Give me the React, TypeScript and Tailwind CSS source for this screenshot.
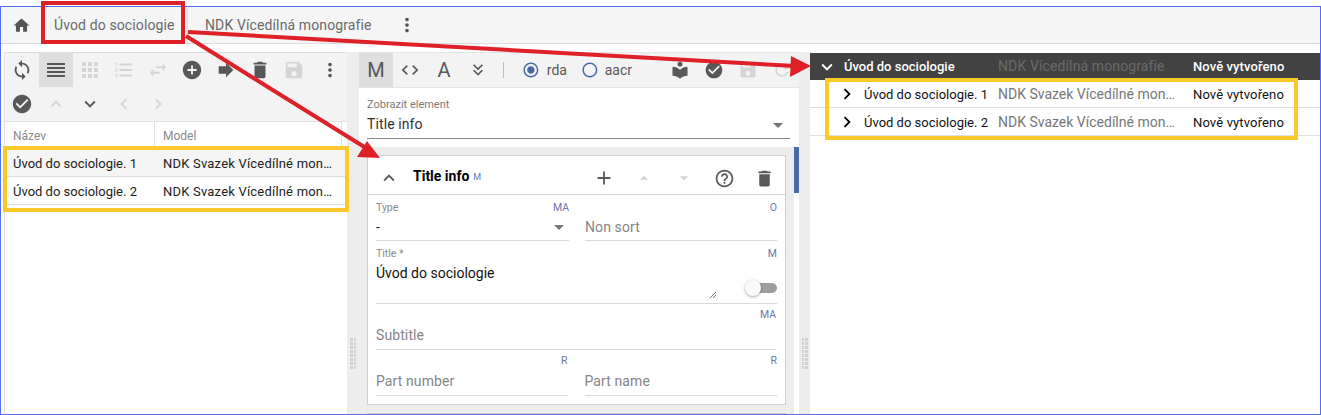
import type { ReactNode } from "react";
import {
  MdAdd,
  MdAddCircle,
  MdApps,
  MdArrowDropDown,
  MdArrowDropUp,
  MdCheckCircle,
  MdChevronLeft,
  MdChevronRight,
  MdCode,
  MdDelete,
  MdExpandLess,
  MdExpandMore,
  MdForward,
  MdFormatListNumbered,
  MdHelpOutline,
  MdHome,
  MdKeyboardDoubleArrowDown,
  MdLocalLibrary,
  MdMoreVert,
  MdRadioButtonChecked,
  MdRadioButtonUnchecked,
  MdRefresh,
  MdReorder,
  MdSave,
  MdSwapHoriz,
  MdSync,
} from "react-icons/md";

// ─── Toolbar button ───────────────────────────────────────────────────────────

function Tool({ children, active, off }: { children: ReactNode; active?: boolean; off?: boolean }) {
  return (
    <span
      className={
        "flex h-[34px] w-[34px] shrink-0 items-center justify-center " +
        (active ? "bg-[#dedede] " : "") +
        (off ? "text-[#d5d5d5]" : "text-[#585858]")
      }
    >
      {children}
    </span>
  );
}

// ─── Form field ───────────────────────────────────────────────────────────────

function Field({
  label,
  usage,
  placeholder,
  value,
  select,
  className,
}: {
  label?: string;
  usage: string;
  placeholder?: string;
  value?: string;
  select?: boolean;
  className: string;
}) {
  return (
    <div className={"flex flex-col border-b border-[#d9d9d9] " + className}>
      <div className="flex h-[12px] shrink-0 items-center justify-between text-[10.5px] leading-none">
        <span className="text-[#8a8a8a]">{label}</span>
        <span className="text-[#6a76ab]">{usage}</span>
      </div>
      <div className="flex flex-1 items-center justify-between text-[14px] tracking-[0.1px]">
        <span className={placeholder ? "text-[#858585]" : "text-[#222222]"}>{placeholder ?? value}</span>
        {select && <MdArrowDropDown size={24} className="-mr-[2px] text-[#757575]" />}
      </div>
    </div>
  );
}

// ─── Gutter grip ──────────────────────────────────────────────────────────────

function Gutter({ className }: { className: string }) {
  return (
    <div className={"flex shrink-0 justify-center bg-[#ededed] pt-[286px] " + className}>
      <div className="grid h-[31px] w-[6px] grid-cols-2 gap-x-[1px] gap-y-[1px]">
        {Array.from({ length: 16 }).map((_, i) => (
          <span key={i} className="h-[3px] w-[2.5px] bg-[#d2d2d2]" />
        ))}
      </div>
    </div>
  );
}

const LEFT_ROWS = ["Úvod do sociologie. 1", "Úvod do sociologie. 2"];

export default function App() {
  return (
    <div className="relative h-[415px] w-[1321px] overflow-hidden bg-white pt-[6px] text-[13px] [font-family:Roboto,sans-serif]">
      <div className="flex h-[409px] flex-col border border-[#4f6ff0]">
        {/* ── Top bar ─────────────────────────────────────────────────────── */}
        <div className="flex h-[37px] shrink-0 items-center border-b border-[#dddddd] bg-[#f5f5f5] text-[14px] tracking-[0.12px] text-[#6a6a6a]">
          <MdHome size={19} className="ml-[11px] text-[#555555]" />
          <span className="ml-[23px] flex h-full w-[134px] items-center border-r border-[#dddddd]">Úvod do sociologie</span>
          <span className="ml-[17px] w-[191px]">NDK Vícedílná monografie</span>
          <MdMoreVert size={22} className="text-[#555555]" />
        </div>

        <div className="flex min-h-0 flex-1 pt-[8px]">
          {/* ── Left panel ────────────────────────────────────────────────── */}
          <div className="ml-[3px] w-[343px] shrink-0 border-l border-t border-[#e0e0e0]">
            <div className="border-b border-[#e0e0e0] bg-[#f3f3f3]">
              <div className="flex">
                <Tool><MdSync size={22} /></Tool>
                <Tool active><MdReorder size={24} /></Tool>
                <Tool off><MdApps size={24} /></Tool>
                <Tool off><MdFormatListNumbered size={22} /></Tool>
                <Tool off><MdSwapHoriz size={22} /></Tool>
                <Tool><MdAddCircle size={22} /></Tool>
                <Tool><MdForward size={22} /></Tool>
                <Tool><MdDelete size={22} /></Tool>
                <Tool off><MdSave size={22} /></Tool>
                <span className="w-[4px]" />
                <Tool><MdMoreVert size={22} /></Tool>
              </div>
              <div className="flex">
                <Tool><MdCheckCircle size={22} /></Tool>
                <Tool off><MdExpandLess size={22} /></Tool>
                <Tool><MdExpandMore size={22} /></Tool>
                <Tool off><MdChevronLeft size={22} /></Tool>
                <Tool off><MdChevronRight size={22} /></Tool>
              </div>
            </div>
            <div className="flex h-[27px] border-b border-[#e0e0e0] text-[12px] text-[#8a8a8a]">
              <div className="flex w-[150px] items-center border-r border-[#e0e0e0] pl-[8px] pt-[2px]">Název</div>
              <div className="flex w-[187px] items-center border-r border-[#e0e0e0] pl-[8px] pt-[2px]">Model</div>
            </div>
            {LEFT_ROWS.map((name, idx) => (
              <div
                key={name}
                className={"flex h-[28px] items-center border-b border-[#dddddd] pt-[2px] " + (idx === 0 ? "bg-[#f5f5f5]" : "")}
              >
                <div className="w-[150px] pl-[8px] text-[#222222]">{name}</div>
                <div className="w-[178px] truncate pl-[8px] tracking-[0.2px] text-[#222222]">NDK Svazek Vícedílné monografie</div>
              </div>
            ))}
          </div>

          <Gutter className="w-[12px]" />

          {/* ── Middle panel ──────────────────────────────────────────────── */}
          <div className="flex w-[440px] shrink-0 flex-col">
            <div className="flex h-[36px] shrink-0 items-center border-b border-t border-[#e4e4e4] bg-[#f3f3f3] text-[#585858]">
              <Tool active><span className="text-[20px]">M</span></Tool>
              <Tool><MdCode size={20} /></Tool>
              <Tool><span className="text-[20px]">A</span></Tool>
              <Tool><MdKeyboardDoubleArrowDown size={20} /></Tool>
              <span className="ml-[8px] h-[16px] w-px bg-[#bdbdbd]" />
              <MdRadioButtonChecked size={18} className="ml-[18px] text-[#4a6aa5]" />
              <span className="ml-[7px] text-[14px]">rda</span>
              <MdRadioButtonUnchecked size={18} className="ml-[14px] text-[#4a6aa5]" />
              <span className="ml-[6px] text-[14px]">aacr</span>
              <span className="ml-[31px] flex">
                <Tool><MdLocalLibrary size={20} /></Tool>
                <Tool><MdCheckCircle size={20} /></Tool>
                <Tool off><MdSave size={20} /></Tool>
                <Tool off><MdRefresh size={20} /></Tool>
              </span>
            </div>
            <div className="h-[59px] shrink-0 px-[8px] pt-[10px]">
              <div className="text-[11px] leading-[13px] text-[#7a7a7a]">Zobrazit element</div>
              <div className="flex h-[28px] w-[423px] items-center justify-between border-b border-[#8a8a8a] text-[14px] tracking-[0.1px] text-[#333333]">
                <span>Title info</span>
                <MdArrowDropDown size={24} className="text-[#757575]" />
              </div>
            </div>
            <div className="flex min-h-0 flex-1">
              <div className="w-[435px] shrink-0 overflow-hidden bg-[#ededed] pl-[8px] pt-[8px]">
                <div className="h-[250px] w-[419px] border border-[#cfcfcf] bg-white">
                  <div className="flex h-[39px] items-center border-b border-[#d4d4d4] text-[#5a5a5a]">
                    <MdExpandLess size={22} className="ml-[10px] mt-[6px]" />
                    <span className="ml-[13px] mt-[2px] text-[14px] font-bold text-black">Title info</span>
                    <span className="ml-[4px] mt-[6px] text-[9px] text-[#6a76ab]">M</span>
                    <MdAdd size={22} className="ml-[112px] mt-[6px]" />
                    <MdArrowDropUp size={20} className="ml-[19px] mt-[6px] text-[#d5d5d5]" />
                    <MdArrowDropDown size={20} className="ml-[20px] mt-[6px] text-[#d5d5d5]" />
                    <MdHelpOutline size={21} className="ml-[20px] mt-[6px]" />
                    <MdDelete size={21} className="ml-[19px] mt-[6px]" />
                  </div>
                  <div className="px-[8px] pt-[7px]">
                    <div className="flex gap-[16px]">
                      <Field label="Type" usage="MA" value="-" select className="h-[39px] w-[193px]" />
                      <Field usage="O" placeholder="Non sort" className="h-[39px] w-[192px]" />
                    </div>
                    <div className="relative mt-[7px] h-[56px] w-[401px] border-b border-[#d9d9d9]">
                      <div className="flex h-[12px] items-center justify-between text-[10.5px] leading-none">
                        <span className="text-[#8a8a8a]">Title *</span>
                        <span className="text-[#6a76ab]">M</span>
                      </div>
                      <div className="mt-[3px] text-[14px] leading-[20px] text-[#111111]">Úvod do sociologie</div>
                      {/* textarea grip + switch */}
                      <svg className="absolute left-[333px] top-[43px]" width="8" height="8" viewBox="0 0 8 8">
                        <path d="M1 7 L7 1 M4 7 L7 4" stroke="#555555" strokeWidth="0.8" />
                      </svg>
                      <span className="absolute left-[371px] top-[35px] h-[10px] w-[30px] rounded-full bg-[#9e9e9e]" />
                      <span className="absolute left-[369px] top-[32px] h-[16px] w-[16px] rounded-full bg-[#fafafa] shadow-[0_1px_3px_rgba(0,0,0,0.35)]" />
                    </div>
                    <Field usage="MA" placeholder="Subtitle" className="mt-[5px] h-[41px] w-[400px]" />
                    <div className="mt-[5px] flex gap-[17px]">
                      <Field usage="R" placeholder="Part number" className="h-[41px] w-[192px]" />
                      <Field usage="R" placeholder="Part name" className="h-[41px] w-[193px]" />
                    </div>
                  </div>
                </div>
                <div className="mt-[8px] h-[10px] w-[419px] border border-[#cfcfcf] bg-white" />
              </div>
              <div className="w-[5px] shrink-0 bg-white">
                <div className="h-[46px] w-[5px] bg-[#4a6aa5]" />
              </div>
            </div>
          </div>

          <Gutter className="w-[11px]" />

          {/* ── Right tree ────────────────────────────────────────────────── */}
          <div className="min-w-0 flex-1 pt-[1px]">
            <div className="flex h-[27px] items-center bg-[#424242] text-white">
              <MdExpandMore size={22} className="ml-[6px]" />
              <span className="ml-[6px] w-[154px] font-medium">Úvod do sociologie</span>
              <span className="w-[195px] text-[14px] tracking-[0.12px] text-[#6a6a6a]">NDK Vícedílná monografie</span>
              <span className="font-medium tracking-[0.1px]">Nově vytvořeno</span>
            </div>
            {LEFT_ROWS.map((name) => (
              <div key={name} className="flex h-[28px] items-center border-b border-[#e0e0e0] pt-[2px]">
                <MdChevronRight size={22} className="ml-[26px] -mt-[2px] text-black" />
                <span className="ml-[6px] w-[134px] text-[#111111]">{name}</span>
                <span className="w-[180px] truncate text-[14px] text-[#777777]">NDK Svazek Vícedílné monografie</span>
                <span className="ml-[15px] tracking-[0.14px] text-[#111111]">Nově vytvořeno</span>
              </div>
            ))}
          </div>
        </div>
      </div>

      {/* ── Annotations ───────────────────────────────────────────────────── */}
      <div className="absolute left-[41px] top-[1px] h-[43px] w-[144px] border-[4px] border-[#de2027]" />
      <div className="absolute left-[3px] top-[146px] h-[66px] w-[346px] border-[4px] border-[#fcc92c]" />
      <div className="absolute left-[825px] top-[78px] h-[62px] w-[473px] border-[4px] border-[#fcc92c]" />
      <svg className="absolute left-0 top-0" width="1321" height="415" viewBox="0 0 1321 415">
        <path d="M188 32 L795 66" stroke="#de2027" strokeWidth="4" fill="none" />
        <polygon points="811,66 791,56 790,77" fill="#de2027" />
        <path d="M186 36 L366 148" stroke="#de2027" strokeWidth="4" fill="none" />
        <polygon points="380,158 357,157 367,141" fill="#de2027" />
      </svg>
    </div>
  );
}
